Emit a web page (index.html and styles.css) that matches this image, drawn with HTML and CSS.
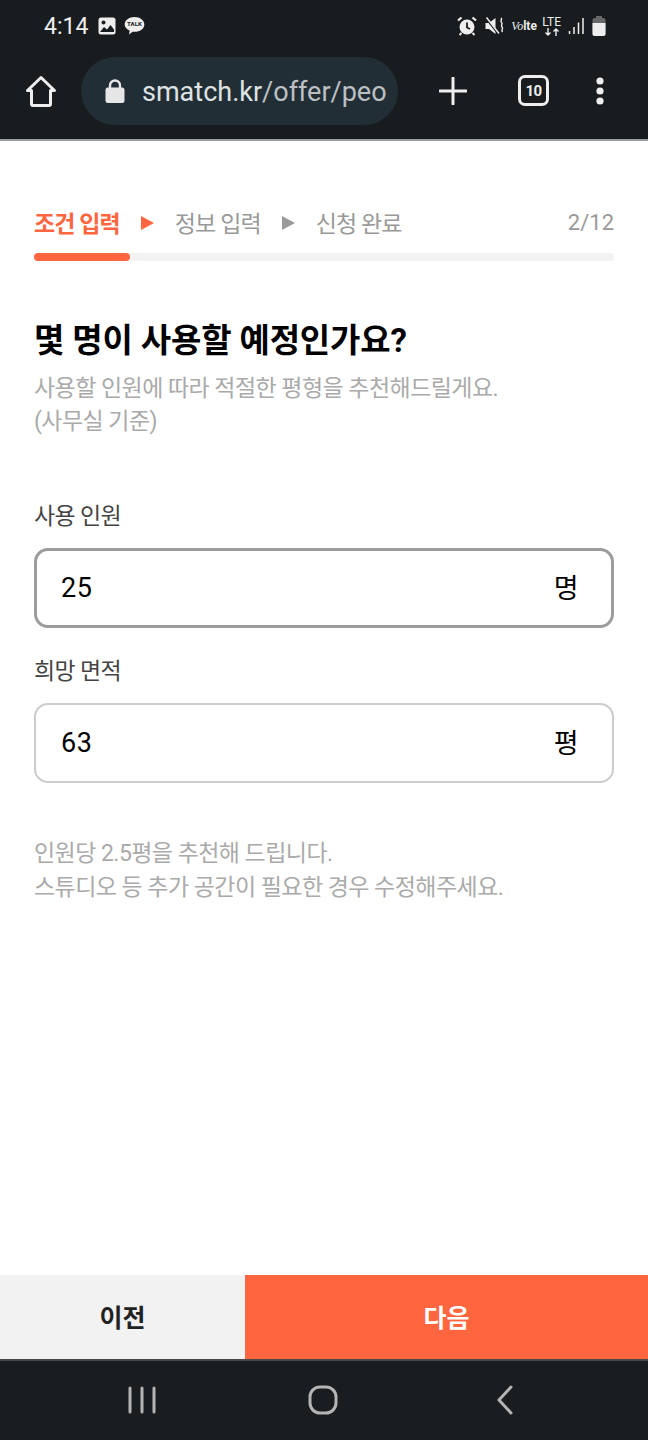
FILE: index.html
```html
<!DOCTYPE html>
<html lang="ko">
<head>
    <meta charset="UTF-8">
    <meta name="viewport" content="width=device-width, initial-scale=1.0">
    <title>smatch - 조건 입력</title>
    <link rel="stylesheet" href="styles.css">
</head>
<body>
    <div class="phone">
        <header class="chrome">
            <div class="status-bar">
                <div class="status-left">
                    <span class="clock">4:14</span>
                    <svg class="status-icon" width="18" height="18" viewBox="0 0 18 18"><rect x="0.5" y="0.5" width="17" height="17" rx="2.5" fill="#eeeeee"/><circle cx="5.5" cy="5.5" r="2" fill="#181c1f"/><path d="M2 15l4-5 3 2.500 3.500-4.500 3.500 4.500v2.500z" fill="#181c1f"/></svg>
                    <svg class="talk-icon" width="21" height="20" viewBox="0 0 22 20"><path d="M11 0.500c5.700 0 10.300 3.500 10.300 7.800s-4.600 7.800-10.300 7.800c-.7 0-1.300 0-2-.2l-3.700 3 .6-4.100c-3-1.300-5.200-3.800-5.200-6.500 0-4.300 4.600-7.800 10.300-7.800z" fill="#eeeeee"/><text x="11" y="10.500" text-anchor="middle" class="talk-text">TALK</text></svg>
                </div>
                <div class="status-right">
                    <svg width="20" height="20" viewBox="0 0 20 20"><circle cx="10" cy="11" r="7.500" fill="#eeeeee"/><path d="M10 6.500v5l3 1.500" fill="none" stroke="#181c1f" stroke-width="1.800"/><path d="M1 4.500l3.500-3M19 4.500l-3.500-3" stroke="#eeeeee" stroke-width="2.200"/><path d="M4.500 17l-2 2M15.500 17l2 2" stroke="#eeeeee" stroke-width="1.800"/></svg>
                    <svg class="mute-icon" width="20" height="20" viewBox="0 0 20 20"><path d="M0.500 7h3.500l6.500-5v16l-6.500-5h-3.500z" fill="#eeeeee"/><path d="M0.500 1.500l12.500 16" stroke="#181c1f" stroke-width="2"/><path d="M1.500 1.500l12.500 16" stroke="#eeeeee" stroke-width="1.500"/><path d="M16 2c2 1.500-1.500 3 .5 4.500s-1.500 3 .5 4.500-1.500 3 .5 5" fill="none" stroke="#eeeeee" stroke-width="1.500"/></svg>
                    <span class="volte"><i>Vo</i><b>lte</b></span>
                    <span class="lte">LTE<svg width="16" height="8" viewBox="0 0 16 8"><path d="M4 0v7M1.500 4.500l2.500 2.500 2.500-2.500M12 8v-7M9.500 3.500l2.500-2.500 2.500 2.500" fill="none" stroke="#eeeeee" stroke-width="1.400"/></svg></span>
                    <svg class="signal-icon" width="16" height="18" viewBox="0 0 16 18"><path d="M1.500 14v3M6 10v7M10.500 5.500v11.500M15 1v16" stroke="#eeeeee" stroke-width="1.500"/></svg>
                    <svg class="battery-icon" width="14" height="20" viewBox="0 0 14 20"><rect x="4" y="0" width="6" height="3" fill="#66686a"/><rect x="0.500" y="2" width="13" height="18" rx="2" fill="#66686a"/><path d="M0.500 7h13v11a2 2 0 0 1-2 2h-9a2 2 0 0 1-2-2z" fill="#eeeeee"/></svg>
                </div>
            </div>
            <div class="toolbar">
                <svg class="home-icon" width="32" height="32" viewBox="0 0 32 32"><path d="M2.500 15.500L16 2.500l13.500 13h-4v13.500a1.500 1.500 0 0 1-1.500 1.500H8a1.500 1.500 0 0 1-1.500-1.500V15.500z" fill="none" stroke="#eeeeee" stroke-width="3" stroke-linejoin="round"/></svg>
                <div class="address">
                    <svg class="lock-icon" width="20" height="24" viewBox="0 0 20 24"><path d="M5 10V6.500a5 5 0 0 1 10 0V10" fill="none" stroke="#e6e6e6" stroke-width="2.400"/><rect x="0.500" y="8.500" width="19" height="15.500" rx="2.500" fill="#e6e6e6"/></svg>
                    <span class="url"><span class="url-host">smatch.kr</span>/offer/peo</span>
                </div>
                <svg class="plus-icon" width="28" height="28" viewBox="0 0 28 28"><path d="M14 1v26M1 14h26" stroke="#eeeeee" stroke-width="3" stroke-linecap="round"/></svg>
                <div class="tabs-count">10</div>
                <svg class="more-icon" width="10" height="30" viewBox="0 0 10 30"><circle cx="5" cy="5" r="3.600" fill="#eeeeee"/><circle cx="5" cy="15" r="3.600" fill="#eeeeee"/><circle cx="5" cy="25" r="3.600" fill="#eeeeee"/></svg>
            </div>
        </header>

        <main class="content">
            <div class="steps">
                <span class="step active">조건 입력</span>
                <span class="arrow active"></span>
                <span class="step">정보 입력</span>
                <span class="arrow"></span>
                <span class="step">신청 완료</span>
                <span class="count">2/12</span>
            </div>
            <div class="progress"><div class="progress-fill" style="width: 16.6%"></div></div>

            <h1 class="title">몇 명이 사용할 예정인가요?</h1>
            <p class="desc">사용할 인원에 따라 적절한 평형을 추천해드릴게요.<br>(사무실 기준)</p>

            <div class="form-group first">
                <label class="field-label">사용 인원</label>
                <div class="field focused">
                    <span class="field-value">25</span>
                    <span class="field-unit">명</span>
                </div>
            </div>
            <div class="form-group">
                <label class="field-label">희망 면적</label>
                <div class="field">
                    <span class="field-value">63</span>
                    <span class="field-unit">평</span>
                </div>
            </div>

            <p class="hint">인원당 2.5평을 추천해 드립니다.<br>스튜디오 등 추가 공간이 필요한 경우 수정해주세요.</p>
        </main>

        <div class="actions">
            <button class="btn-prev">이전</button>
            <button class="btn-next">다음</button>
        </div>

        <nav class="nav-bar">
            <svg width="30" height="28" viewBox="0 0 30 28"><path d="M3 2v24M15 2v24M27 2v24" stroke="#b4b4b4" stroke-width="3" stroke-linecap="round"/></svg>
            <svg class="nav-home" width="30" height="30" viewBox="0 0 30 30"><rect x="2" y="2" width="26" height="26" rx="10" fill="none" stroke="#b4b4b4" stroke-width="3"/></svg>
            <svg class="nav-back" width="18" height="30" viewBox="0 0 18 30"><path d="M15 2L3 15l12 13" fill="none" stroke="#b4b4b4" stroke-width="3" stroke-linecap="round" stroke-linejoin="round"/></svg>
        </nav>
    </div>
</body>
</html>
```

FILE: styles.css
```css
* {
    margin: 0;
    padding: 0;
    box-sizing: border-box;
}

body {
    font-family: Roboto, 'Noto Sans CJK KR', sans-serif;
    background: white;
}

.phone {
    width: 648px;
    height: 1440px;
    display: flex;
    flex-direction: column;
    overflow: hidden;
}

/* browser chrome */
.chrome {
    height: 141px;
    background: #181c1f;
    border-bottom: 2px solid #9a9c9e;
    color: #eeeeee;
}

.status-bar {
    height: 52px;
    padding: 0 42px 0 44px;
    display: flex;
    align-items: center;
    justify-content: space-between;
}

.status-left,
.status-right {
    display: flex;
    align-items: center;
}

.clock {
    font-size: 23px;
    margin-right: 10px;
}

.talk-icon {
    margin-left: 8px;
}

.talk-text {
    font-size: 6.500px;
    font-weight: 700;
    fill: #181c1f;
}

.mute-icon {
    margin-left: 8px;
}

.volte {
    margin-left: 6px;
    font-size: 12px;
    width: 26px;
    white-space: nowrap;
}

.volte i {
    font-family: 'Liberation Serif', serif;
}

.lte {
    margin-left: 5px;
    display: flex;
    flex-direction: column;
    align-items: center;
    font-size: 12px;
    line-height: 12px;
}

.signal-icon {
    margin-left: 7px;
}

.battery-icon {
    margin-left: 8px;
}

.toolbar {
    height: 87px;
    padding: 5px 43px 15px 25px;
    display: flex;
    align-items: center;
}

.address {
    width: 317px;
    height: 68px;
    margin-left: 24px;
    padding-left: 24px;
    background: #222e35;
    border-radius: 34px;
    display: flex;
    align-items: center;
    overflow: hidden;
}

.url {
    margin-left: 17px;
    padding-top: 3px;
    font-size: 27px;
    color: #bcc0c3;
    white-space: nowrap;
}

.url-host {
    color: #dfe2e3;
}

.plus-icon {
    margin-left: 41px;
}

.tabs-count {
    width: 31px;
    height: 31px;
    margin-left: 51px;
    border: 3px solid #eeeeee;
    border-radius: 7px;
    font-size: 15px;
    font-weight: 700;
    letter-spacing: -0.5px;
    display: flex;
    align-items: center;
    justify-content: center;
}

.more-icon {
    margin-left: auto;
}

/* form */
.content {
    flex: 1;
    padding: 62px 34px 0;
}

.steps {
    display: flex;
    align-items: center;
    height: 40px;
    padding-bottom: 3px;
    font-size: 23px;
    letter-spacing: -0.9px;
    color: #999999;
}

.step.active {
    color: #ff6640;
    font-weight: 700;
}

.arrow {
    width: 0;
    height: 0;
    margin: 3px 21px 0;
    border-top: 7px solid transparent;
    border-bottom: 7px solid transparent;
    border-left: 13px solid #999999;
}

.arrow.active {
    border-left-color: #ff6640;
}

.count {
    margin-left: auto;
    padding-top: 1px;
    font-size: 22px;
    letter-spacing: 0;
}

.progress {
    height: 8px;
    margin-top: 10px;
    background: #f2f2f2;
    border-radius: 4px;
}

.progress-fill {
    height: 100%;
    background: #ff6640;
    border-radius: 4px;
}

.title {
    margin-top: 57px;
    font-size: 33px;
    line-height: 46px;
    letter-spacing: -0.15px;
    font-weight: 700;
    color: black;
}

.desc {
    margin-top: 8px;
    font-size: 23px;
    line-height: 33px;
    letter-spacing: -0.55px;
    color: #aaaaaa;
}

.form-group {
    margin-top: 28px;
}

.form-group.first {
    margin-top: 63px;
}

.field-label {
    display: block;
    font-size: 23px;
    line-height: 32px;
    letter-spacing: -0.7px;
    color: #444444;
}

.field {
    height: 80px;
    margin-top: 15px;
    padding: 0 33px 0 25px;
    border: 2px solid #cccccc;
    border-radius: 14px;
    display: flex;
    align-items: center;
    justify-content: space-between;
    font-size: 27px;
    letter-spacing: 0.5px;
    color: black;
}

.field.focused {
    padding: 0 32px 0 24px;
    border: 3px solid #9c9c9c;
}

.field-unit {
    padding-bottom: 4px;
}

.hint {
    margin-top: 54px;
    font-size: 23px;
    line-height: 34px;
    letter-spacing: -0.55px;
    color: #aaaaaa;
}

/* bottom */
.actions {
    height: 84px;
    display: flex;
}

.actions button {
    padding-bottom: 2px;
    border: none;
    font-family: inherit;
    font-size: 25px;
    font-weight: 700;
}

.btn-prev {
    width: 245px;
    background: #f2f2f2;
    color: #222222;
}

.btn-next {
    flex: 1;
    background: #ff6640;
    color: white;
}

.nav-bar {
    height: 81px;
    padding: 0 0 2px 127px;
    background: #1a1d20;
    border-top: 2px solid #46484a;
    display: flex;
    align-items: center;
}

.nav-home {
    margin-left: 151px;
}

.nav-back {
    margin-left: 158px;
}
```
